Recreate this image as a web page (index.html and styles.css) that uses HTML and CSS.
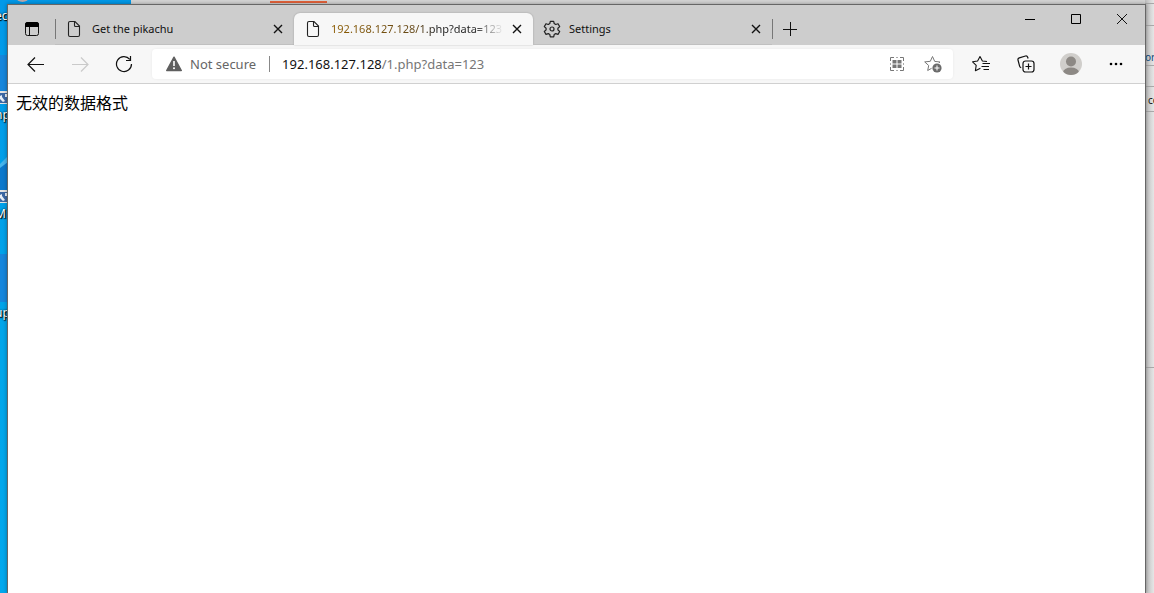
FILE: index.html
```html
<!DOCTYPE html>
<html lang="en">
<head>
<meta charset="utf-8">
<title>192.168.127.128/1.php?data=123</title>
<link rel="stylesheet" href="styles.css">
</head>
<body>
<div class="desktop">
  <div class="wallpaper" aria-hidden="true">
    <span class="trash"></span>
    <span class="desk-label label-rec">ec</span>
    <span class="blob blob-top"></span>
    <svg class="shortcut shortcut-a" width="8" height="13" viewBox="0 0 8 13"><path fill="#e4e4e4" d="M0 0h8v13H0z"/><path fill="#3c68a4" d="M0 2h7v10H0z"/><path fill="#e8eef6" d="M0 5l2-1v2l3 4-2 1-3-3zM5 3h2v3H5z"/></svg>
    <span class="desk-label label-a">hp</span>
    <svg class="ray" width="8" height="34" viewBox="0 0 8 34"><path fill="#0b78cc" d="M0 10l8-6v30H0z"/><path fill="#45b4ec" d="M0 8l8-8v6l-8 6z"/></svg>
    <svg class="shortcut shortcut-b" width="8" height="13" viewBox="0 0 8 13"><path fill="#e4e4e4" d="M0 0h8v13H0z"/><path fill="#3c68a4" d="M0 2h7v10H0z"/><path fill="#e8eef6" d="M0 5l2-1v2l3 4-2 1-3-3zM5 3h2v3H5z"/></svg>
    <span class="desk-label label-b">Mi</span>
    <span class="blob blob-mid"></span>
    <span class="desk-label label-c">up</span>
  </div>
  <div class="back-window" aria-hidden="true">
    <span class="accent"></span>
    <div class="back-edge">
      <span class="row row-a"></span>
      <span class="row row-b"></span>
      <span class="row row-c">ore</span>
      <span class="row row-d"></span>
      <span class="row row-e">co</span>
      <span class="row row-f"></span>
    </div>
  </div>

  <div class="browser">
    <header class="titlebar">
      <button class="icon-btn tab-actions" aria-label="Tab actions menu">
        <svg width="16" height="16" viewBox="0 0 16 16"><rect x="1.5" y="1.5" width="13" height="13" rx="2" fill="none" stroke="#111"/><path d="M1 6V3.500Q1 1 3.500 1h9Q15 1 15 3.500V6z" fill="#000"/><path d="M5.500 6v8.500" stroke="#111"/></svg>
      </button>
      <nav class="tabs" aria-label="Tabs">
        <div class="tab tab-first">
          <svg class="favicon" width="16" height="18" viewBox="0 0 16 18"><path d="M4 1.500h5l4.500 4.500v9q0 1.500-1.500 1.500H4q-1.500 0-1.500-1.500V3q0-1.500 1.500-1.500zM8.500 1.500v4q0 1 1 1h4" fill="none" stroke="#222" stroke-width="1.100"/></svg>
          <span class="tab-title">Get the pikachu</span>
          <button class="close" aria-label="Close tab"><svg width="10" height="10" viewBox="0 0 10 10"><path d="M1 1l8 8M9 1L1 9" stroke="#111" stroke-width="1.400"/></svg></button>
        </div>
        <div class="tab tab-active">
          <svg class="favicon" width="16" height="18" viewBox="0 0 16 18"><path d="M4 1.500h5l4.500 4.500v9q0 1.500-1.500 1.500H4q-1.500 0-1.500-1.500V3q0-1.500 1.500-1.500zM8.500 1.500v4q0 1 1 1h4" fill="none" stroke="#222" stroke-width="1.100"/></svg>
          <span class="tab-title fade">192.168.127.128/1.php?data=123</span>
          <button class="close" aria-label="Close tab"><svg width="10" height="10" viewBox="0 0 10 10"><path d="M1 1l8 8M9 1L1 9" stroke="#111" stroke-width="1.400"/></svg></button>
        </div>
        <div class="tab tab-last">
          <svg class="favicon" width="18" height="18" viewBox="0 0 18 18" fill="none" stroke="#222" stroke-width="1.200" stroke-linejoin="round"><path d="M7.300 1.300h3.400l.5 2.300 1.500.9 2.300-.8 1.700 2.900-1.800 1.600v1.700l1.800 1.600-1.700 2.900-2.300-.8-1.500.9-.5 2.300H7.300l-.5-2.300-1.500-.9-2.300.8-1.700-2.900 1.800-1.600V8.200L1.300 6.600 3 3.700l2.300.8 1.500-.9z"/><circle cx="9" cy="9" r="2"/></svg>
          <span class="tab-title">Settings</span>
          <button class="close" aria-label="Close tab"><svg width="10" height="10" viewBox="0 0 10 10"><path d="M1 1l8 8M9 1L1 9" stroke="#111" stroke-width="1.400"/></svg></button>
        </div>
      </nav>
      <button class="icon-btn new-tab" aria-label="New tab"><svg width="14" height="14" viewBox="0 0 14 14"><path d="M7.500 0v14M0 7.500h14" stroke="#111"/></svg></button>
      <div class="window-controls">
        <button aria-label="Minimize"><svg width="12" height="12" viewBox="0 0 12 12"><path d="M1 6.500h10" stroke="#000"/></svg></button>
        <button aria-label="Maximize"><svg width="12" height="12" viewBox="0 0 12 12"><path d="M1.500 1.500h9v9h-9z" fill="none" stroke="#000"/></svg></button>
        <button aria-label="Close"><svg width="12" height="12" viewBox="0 0 12 12"><path d="M1 1l10 10M11 1L1 11" stroke="#111"/></svg></button>
      </div>
    </header>

    <div class="toolbar">
      <button class="icon-btn nav-btn" aria-label="Back"><svg width="18" height="16" viewBox="0 0 18 16"><path d="M17 8.500H1.500M8 1.500l-7 7 7 7" fill="none" stroke="#111" stroke-width="1.200"/></svg></button>
      <button class="icon-btn nav-btn" aria-label="Forward" disabled><svg width="18" height="16" viewBox="0 0 18 16"><path d="M1 8.500h15.500M10 1.500l7 7-7 7" fill="none" stroke="#cacaca" stroke-width="1.200"/></svg></button>
      <button class="icon-btn nav-btn" aria-label="Refresh"><svg width="18" height="18" viewBox="0 0 18 18"><path d="M16.500 9A7.500 7.500 0 1 1 14.800 4.300M15.500 1v4.500H11" fill="none" stroke="#111" stroke-width="1.200"/></svg></button>
      <div class="address">
        <svg class="warning" width="16" height="16" viewBox="0 0 16 16"><path d="M8 1.200L15.300 14.500H.7z" fill="#5f5f5f" stroke="#5f5f5f" stroke-width="1.400" stroke-linejoin="round"/><path d="M8 5v5" stroke="#fff" stroke-width="1.600"/><circle cx="8" cy="12.300" r="1" fill="#fff"/></svg>
        <span class="security">Not secure</span>
        <span class="url" role="textbox" aria-label="Address and search bar" contenteditable="true" spellcheck="false">192.168.127.128<span class="path">/1.php?data=123</span></span>
        <button class="icon-btn address-btn" aria-label="QR code"><svg width="14" height="14" viewBox="0 0 14 14"><path d="M4 .5H.5V4M10 .5h3.500V4M4 13.500H.5V10M10 13.500h3.500V10" fill="none" stroke="#777"/><path d="M6 .5h2M6 13.500h2M.5 6v2M13.500 6v2" stroke="#aaa"/><path d="M2.500 3h4v3.500h-4zM7.500 3h4v3.500h-4zM2.500 7.500h4V11h-4zM7.500 7.500h4V11h-4z" fill="#777"/></svg></button>
        <button class="icon-btn address-btn" aria-label="Add to favorites"><svg width="18" height="18" viewBox="0 0 18 18"><path d="M8.500 1.500l2.200 4.900 5.300.6-4 3.600 1 4.800-4.500-2.600-4.800 2.700 1-5-4-3.600 5.600-.6z" fill="none" stroke="#777" stroke-linejoin="round"/><circle cx="13" cy="13" r="5.500" fill="#fff"/><circle cx="13" cy="13" r="4.600" fill="#6b6b6b"/><path d="M13 10.500v5M10.500 13h5" stroke="#fff"/></svg></button>
      </div>
      <div class="actions">
        <button class="icon-btn" aria-label="Favorites"><svg width="18" height="18" viewBox="0 0 18 18" fill="none" stroke="#111" stroke-width="1.100"><path d="M15 6.500l-4.600-.5L8 1.500 5.600 6l-5 .8 3.600 3.600-.8 5.300 5-2.500M10.500 8.500H18M9.500 11.500H17M11.500 14.500H17" stroke-linejoin="round"/></svg></button>
        <button class="icon-btn" aria-label="Collections"><svg width="18" height="18" viewBox="0 0 18 18" fill="none" stroke="#111" stroke-width="1.200"><rect x="6" y="6" width="11" height="11" rx="2.500"/><path d="M11.500 8.500v6M8.500 11.500h6M4.200 12.800q-1.300-.4-1.600-1.600L1 5q-.4-1.700 1.300-2.200L8.500 1q1.600-.4 2.200 1.200l.4 1.300"/></svg></button>
        <button class="icon-btn" aria-label="Profile"><svg width="22" height="22" viewBox="0 0 22 22"><clipPath id="face"><circle cx="11" cy="11" r="11"/></clipPath><g clip-path="url(#face)"><path fill="#d0cecb" d="M0 0h22v22H0z"/><circle cx="11" cy="8.500" r="5" fill="#8d8985"/><ellipse cx="11" cy="19.500" rx="8" ry="5" fill="#8d8985"/></g></svg></button>
        <button class="icon-btn" aria-label="Settings and more"><svg width="14" height="4" viewBox="0 0 14 4"><circle cx="2" cy="2" r="1.300"/><circle cx="7" cy="2" r="1.300"/><circle cx="12" cy="2" r="1.300"/></svg></button>
      </div>
    </div>

    <main class="page">无效的数据格式</main>
  </div>
</div>
</body>
</html>
```
FILE: styles.css
```css
* { box-sizing: border-box; }

body {
  margin: 0;
  font-family: "Noto Sans", "Open Sans", "Noto Sans CJK SC", sans-serif;
  color: #111;
}

button {
  padding: 0;
  border: 0;
  background: none;
  font: inherit;
}

svg { display: block; flex: none; }

/* Desktop behind the browser */
.desktop {
  position: relative;
  display: flex;
  min-height: 100vh;
  padding: 4px 8px 0 7px;
  overflow: hidden;
  background: #0099e6;
}

.wallpaper {
  position: absolute;
  inset: 0 auto 0 0;
  width: 131px;
  overflow: hidden;
  background: linear-gradient(#0099e9, #00a6ea 60%, #00a8ee);
}

.wallpaper > * { position: absolute; }

.trash {
  top: -8px;
  left: 16px;
  width: 13px;
  height: 10px;
  border-radius: 50%;
  background: #b9a9ab;
}

.desk-label {
  left: -5px;
  color: #fff;
  font-size: 12px;
  line-height: 16px;
  text-shadow: 1px 1px 1px #000, 0 0 2px #000;
}

.label-rec { top: 8px; }
.label-a { top: 107px; }
.label-b { top: 206px; }
.label-c { top: 305px; }

.blob {
  left: 0;
  width: 8px;
  background: #1686dc;
}

.blob-top { top: 55px; height: 36px; }
.blob-mid { top: 254px; height: 48px; }

.shortcut { left: 0; }
.shortcut-a { top: 91px; }
.shortcut-b { top: 190px; }
.ray { top: 156px; left: 0; }

.back-window {
  position: absolute;
  inset: 0 0 0 131px;
  background: #d4d4d4;
}

.accent {
  position: absolute;
  top: 1px;
  left: 139px;
  width: 57px;
  height: 2px;
  background: #e2623a;
}

.back-edge {
  position: absolute;
  inset: 0 0 0 auto;
  display: flex;
  flex-direction: column;
  width: 9px;
  font-size: 10px;
  line-height: 12px;
  background: linear-gradient(90deg, #bcbcbc, #e6e6e6);
}

.row {
  flex: none;
  border-bottom: 1px solid #a8a8a8;
  overflow: hidden;
}

.row-a { height: 4px; }
.row-b { height: 22px; }
.row-c {
  height: 40px;
  padding-top: 25px;
  color: #124a7c;
}
.row-d { height: 21px; }
.row-e {
  height: 25px;
  padding: 7px 0 0 3px;
}
.row-f { height: 256px; }

/* Browser window */
.browser {
  position: relative;
  display: flex;
  flex: 1;
  flex-direction: column;
  min-width: 0;
  border: 1px solid #666;
  border-bottom: 0;
  background: #fff;
  box-shadow: 0 0 4px rgba(0, 0, 0, 0.35);
}

.titlebar {
  display: flex;
  align-items: flex-end;
  height: 40px;
  background: #cdcdcd;
}

.icon-btn {
  display: flex;
  flex: none;
  align-items: center;
  justify-content: center;
}

.tab-actions {
  width: 47px;
  height: 32px;
}

.tabs {
  display: flex;
  flex: 0 1 717px;
  min-width: 0;
  height: 32px;
}

.tab {
  position: relative;
  display: flex;
  flex: 1 1 239px;
  align-items: center;
  min-width: 0;
  padding: 0 11px 0 10px;
  font-size: 11px;
  line-height: 18px;
  border-bottom: 1px solid #c0c0c0;
}

.tab-first::before,
.tab-last::after {
  content: "";
  position: absolute;
  top: 6px;
  width: 1px;
  height: 20px;
  background: #777;
}

.tab-first { padding-left: 11px; }
.tab-first::before { left: 0; }
.tab-last::after { right: -1px; }

.tab-active {
  padding-left: 11px;
  border: 0;
  border-radius: 6px 6px 0 0;
  background: #f7f7f7;
  box-shadow: 0 0 2px rgba(0, 0, 0, 0.25);
}

.tab-title {
  flex: 1;
  min-width: 0;
  margin: 0 8px 0 10px;
  overflow: hidden;
  white-space: nowrap;
}

.tab-last .tab-title { margin-left: 8px; }

.fade {
  color: transparent;
  background: linear-gradient(90deg, #8d5c00 0%, #64481a 50%, #222 60%, #222 82%, transparent 100%);
  background-clip: text;
  -webkit-background-clip: text;
}

.close {
  display: flex;
  align-items: center;
  justify-content: center;
  width: 10px;
  height: 16px;
}

.new-tab {
  width: 36px;
  height: 32px;
}

.window-controls {
  display: flex;
  align-self: flex-start;
  margin-left: auto;
}

.window-controls button {
  display: flex;
  align-items: center;
  justify-content: center;
  width: 46px;
  height: 28px;
}

.toolbar {
  display: flex;
  align-items: center;
  height: 39px;
  padding-left: 6px;
  border-bottom: 1px solid #d0d0d0;
  background: #f7f7f7;
}

.nav-btn {
  width: 44px;
  height: 32px;
}

.address {
  display: flex;
  flex: 1;
  align-items: center;
  min-width: 0;
  height: 30px;
  margin-left: 6px;
  padding: 0 2px 0 14px;
  border-radius: 4px;
  background: #fff;
  box-shadow: 0 0 3px rgba(0, 0, 0, 0.06);
  font-size: 13px;
  line-height: 20px;
}

.security {
  flex: none;
  margin-left: 8px;
  padding-right: 13px;
  color: #666;
}

.url {
  flex: 1;
  min-width: 0;
  height: 16px;
  padding-left: 12px;
  border-left: 1px solid #888;
  line-height: 16px;
  white-space: nowrap;
  outline: 0;
}

.path { color: #767676; }

.address-btn {
  width: 36px;
  height: 30px;
}

.actions {
  display: flex;
  flex: none;
  padding: 0 7px 0 5px;
}

.actions .icon-btn {
  width: 45px;
  height: 32px;
}

.page {
  flex: 1;
  padding: 8px;
  color: #000;
  font-family: "Noto Sans CJK SC", sans-serif;
  font-size: 16px;
  line-height: 20px;
}
```
